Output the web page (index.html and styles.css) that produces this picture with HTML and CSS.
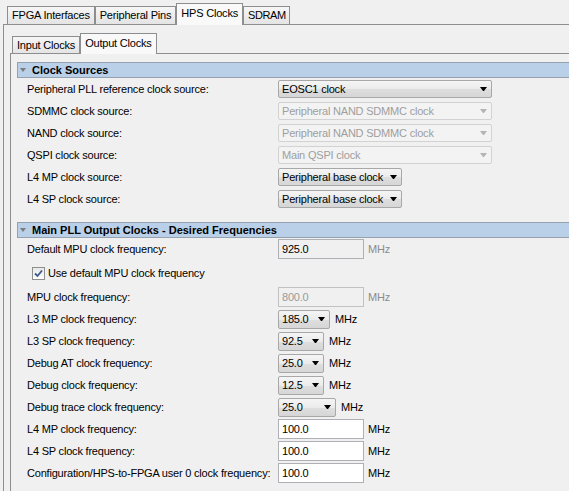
FILE: index.html
```html
<!DOCTYPE html>
<html>
<head>
<meta charset="utf-8">
<link rel="stylesheet" href="styles.css">
</head>
<body>
<div class="app">
  <div class="tabs outer-tabs">
    <div class="tab">FPGA Interfaces</div>
    <div class="tab">Peripheral Pins</div>
    <div class="tab active">HPS Clocks</div>
    <div class="tab narrow">SDRAM</div>
  </div>
  <div class="panel outer-panel">
    <div class="tabs inner-tabs">
      <div class="tab">Input Clocks</div>
      <div class="tab active">Output Clocks</div>
    </div>
    <div class="panel inner-panel">
      <section class="group">
        <div class="group-head"><span class="caret"></span>Clock Sources</div>
        <div class="row"><span class="label">Peripheral PLL reference clock source:</span>
          <div class="combo w214"><span class="val">EOSC1 clock</span><span class="arr"><i></i></span></div></div>
        <div class="row"><span class="label">SDMMC clock source:</span>
          <div class="combo w214 dis"><span class="val">Peripheral NAND SDMMC clock</span><span class="arr"><i></i></span></div></div>
        <div class="row"><span class="label">NAND clock source:</span>
          <div class="combo w214 dis"><span class="val">Peripheral NAND SDMMC clock</span><span class="arr"><i></i></span></div></div>
        <div class="row"><span class="label">QSPI clock source:</span>
          <div class="combo w214 dis"><span class="val">Main QSPI clock</span><span class="arr"><i></i></span></div></div>
        <div class="row"><span class="label">L4 MP clock source:</span>
          <div class="combo w124"><span class="val">Peripheral base clock</span><span class="arr"><i></i></span></div></div>
        <div class="row"><span class="label">L4 SP clock source:</span>
          <div class="combo w124"><span class="val">Peripheral base clock</span><span class="arr"><i></i></span></div></div>
      </section>
      <section class="group">
        <div class="group-head"><span class="caret"></span>Main PLL Output Clocks - Desired Frequencies</div>
        <div class="row"><span class="label">Default MPU clock frequency:</span>
          <div class="ctl"><div class="field ro">925.0</div><span class="unit dim">MHz</span></div></div>
        <div class="row check-row">
          <span class="checkbox"><svg width="9" height="9" viewBox="0 0 9 9"><path d="M1 4.5 L3.5 7 L8 1.5" fill="none" stroke="#3a5a90" stroke-width="1.8"/></svg></span>
          <span>Use default MPU clock frequency</span></div>
        <div class="row"><span class="label">MPU clock frequency:</span>
          <div class="ctl"><div class="field dis">800.0</div><span class="unit dim">MHz</span></div></div>
        <div class="row"><span class="label">L3 MP clock frequency:</span>
          <div class="ctl"><div class="combo sm w52"><span class="val">185.0</span><span class="arr"><i></i></span></div><span class="unit">MHz</span></div></div>
        <div class="row"><span class="label">L3 SP clock frequency:</span>
          <div class="ctl"><div class="combo sm w46"><span class="val">92.5</span><span class="arr"><i></i></span></div><span class="unit">MHz</span></div></div>
        <div class="row"><span class="label">Debug AT clock frequency:</span>
          <div class="ctl"><div class="combo sm w46"><span class="val">25.0</span><span class="arr"><i></i></span></div><span class="unit">MHz</span></div></div>
        <div class="row"><span class="label">Debug clock frequency:</span>
          <div class="ctl"><div class="combo sm w46"><span class="val">12.5</span><span class="arr"><i></i></span></div><span class="unit">MHz</span></div></div>
        <div class="row"><span class="label">Debug trace clock frequency:</span>
          <div class="ctl"><div class="combo sm w58"><span class="val">25.0</span><span class="arr"><i></i></span></div><span class="unit">MHz</span></div></div>
        <div class="row"><span class="label">L4 MP clock frequency:</span>
          <div class="ctl"><div class="field">100.0</div><span class="unit">MHz</span></div></div>
        <div class="row"><span class="label">L4 SP clock frequency:</span>
          <div class="ctl"><div class="field">100.0</div><span class="unit">MHz</span></div></div>
        <div class="row"><span class="label">Configuration/HPS-to-FPGA user 0 clock frequency:</span>
          <div class="ctl"><div class="field">100.0</div><span class="unit">MHz</span></div></div>
      </section>
    </div>
  </div>
</div>
</body>
</html>
```

FILE: styles.css
```css
html, body {
  margin: 0;
  padding: 0;
  background: #f0f0f0;
  overflow: hidden;
}
body {
  font-family: "Liberation Sans", Arial, sans-serif;
  font-size: 11px;
  letter-spacing: -0.2px;
  color: #000;
}
.app {
  box-sizing: border-box;
  width: 569px;
  height: 491px;
  padding-left: 3px;
  display: flex;
  flex-direction: column;
  overflow: hidden;
}
.tabs {
  display: flex;
  align-items: flex-end;
  flex: none;
}
.outer-tabs {
  height: 24px;
  padding-left: 4px;
}
.inner-tabs {
  height: 20px;
  margin-left: 2px;
}
.tab {
  box-sizing: border-box;
  height: 18px;
  line-height: 17px;
  padding: 0 4px;
  border: 1px solid #8d8e90;
  border-bottom: none;
  background: linear-gradient(#f6f6f6, #e4e4e4);
  white-space: nowrap;
}
.tab.narrow {
  padding: 0 3px 0 4px;
  letter-spacing: -0.4px;
}
.inner-tabs .tab {
  height: 17px;
  line-height: 16px;
}
.tab.active {
  height: 22px;
  line-height: 19px;
  margin-bottom: -1px;
  background: #f9f9f9;
  position: relative;
  z-index: 1;
}
.inner-tabs .tab.active {
  height: 21px;
  line-height: 19px;
}
.panel {
  border-left: 1px solid #8d8e90;
  border-top: 1px solid #8d8e90;
  display: flex;
  flex-direction: column;
  flex: 1;
  min-height: 0;
  overflow: hidden;
}
.outer-panel {
  padding: 8px 0 0 6px;
}
.inner-panel {
  padding: 8px 0 0 6px;
}
.group {
  flex: none;
}
.group + .group {
  margin-top: 12px;
}
.group-head {
  display: flex;
  align-items: center;
  box-sizing: border-box;
  height: 16px;
  border: 1px solid #96a2b0;
  border-right: none;
  background: #b9d0e8;
  font-weight: bold;
  letter-spacing: 0;
  white-space: nowrap;
}
.caret {
  width: 0;
  height: 0;
  border-left: 3px solid transparent;
  border-right: 3px solid transparent;
  border-top: 4px solid #7c7c7c;
  margin: 0 6px 0 2px;
}
.row {
  display: flex;
  align-items: center;
  height: 22px;
  padding-left: 10px;
  white-space: nowrap;
}
.label {
  width: 251px;
  flex: none;
}
.check-row {
  height: 26px;
  padding-left: 15px;
}
.checkbox {
  box-sizing: border-box;
  width: 13px;
  height: 13px;
  border: 1px solid #8e8f8f;
  background: linear-gradient(#e8e8e8, #ffffff);
  display: flex;
  align-items: center;
  justify-content: center;
  margin-right: 3px;
}
.ctl {
  display: flex;
  align-items: center;
  gap: 5px;
}
.combo {
  display: flex;
  align-items: center;
  box-sizing: border-box;
  height: 18px;
  border: 1px solid #a8a8a8;
  border-radius: 2px;
  background: linear-gradient(#f5f5f5, #ebebeb 50%, #dedede 52%, #d6d6d6);
  overflow: hidden;
}
.combo.sm {
  height: 19px;
}
.combo .val {
  flex: 1;
  padding-left: 3px;
  overflow: hidden;
}
.combo .arr {
  width: 16px;
  flex: none;
  display: flex;
  justify-content: center;
}
.combo .arr i {
  width: 1px;
  height: 0;
  border-left: 3px solid transparent;
  border-right: 3px solid transparent;
  border-top: 4px solid #000;
}
.combo.dis {
  background: #f3f3f3;
  border-color: #d2d2d2;
  color: #9e9e9e;
}
.combo.dis .arr i {
  border-top-color: #b4b4b4;
}
.w214 { width: 214px; }
.w124 { width: 124px; }
.w52 { width: 52px; }
.w46 { width: 46px; }
.w58 { width: 58px; }
.field {
  box-sizing: border-box;
  width: 86px;
  height: 20px;
  line-height: 18px;
  padding-left: 3px;
  border: 1px solid #aeb0b5;
  background: #fff;
}
.ctl .field + .unit {
  margin-left: -1px;
}
.field.ro {
  background: #f0f0f0;
}
.field.dis {
  background: #f0f0f0;
  color: #9a9a9a;
  border-color: #c2c2c2;
}
.unit.dim {
  color: #8c8c8c;
}
```
